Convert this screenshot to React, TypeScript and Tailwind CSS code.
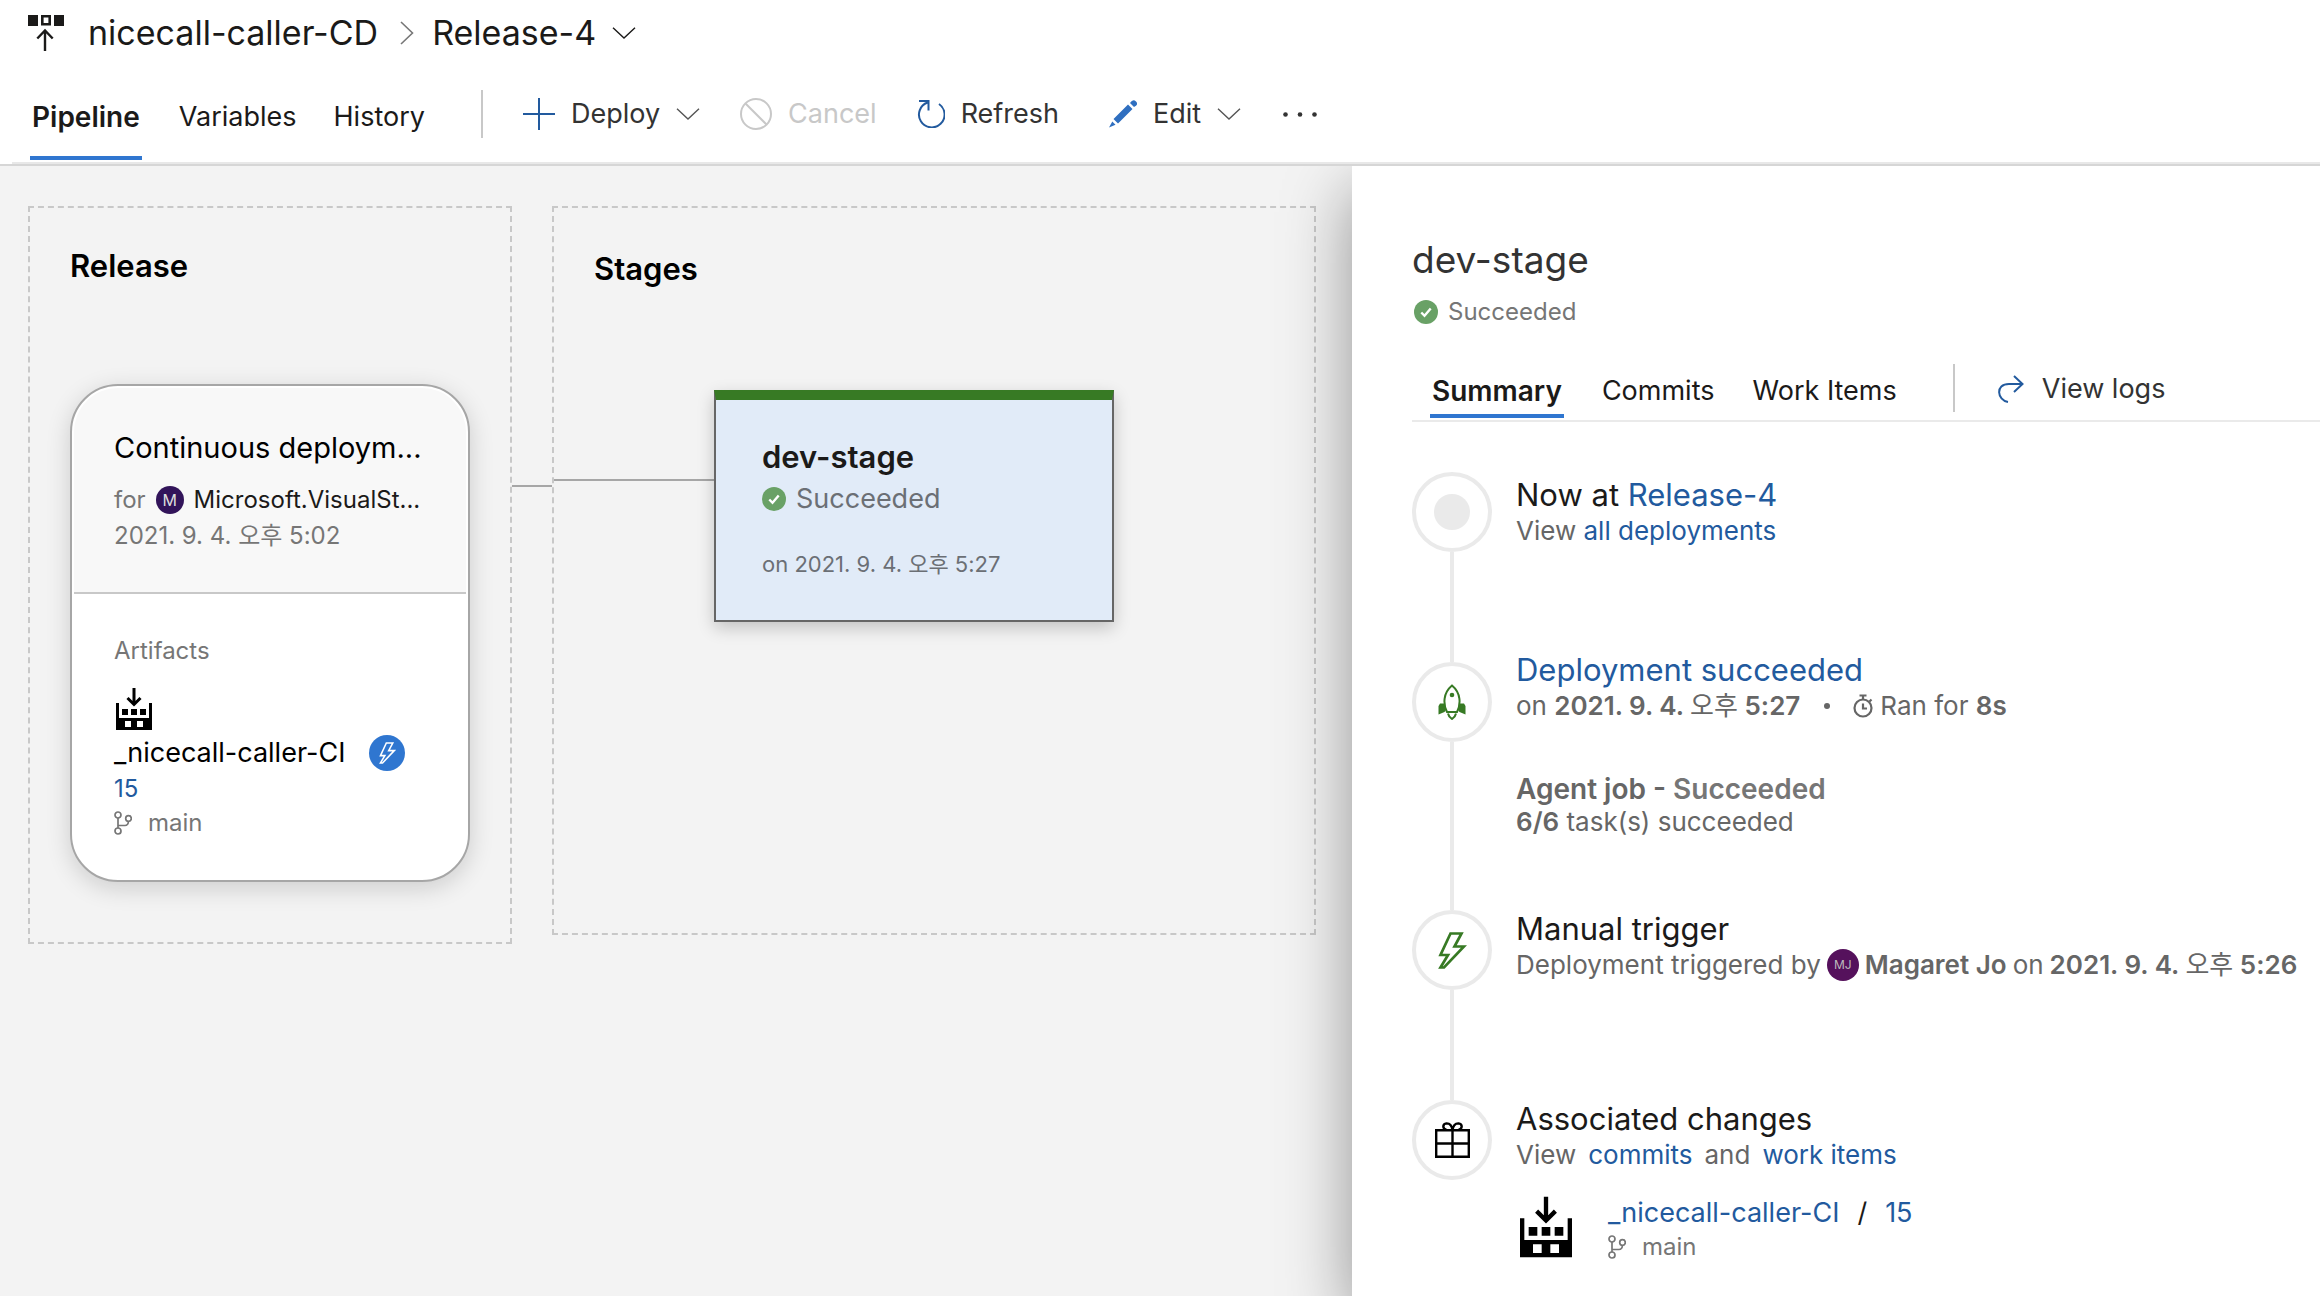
import React from "react";

function DownArrow({ className = "" }: { className?: string }) {
  return (
    <svg viewBox="0 0 24 12" className={"h-3 w-6 " + className} fill="none" stroke="currentColor" strokeWidth="1.4" aria-hidden="true">
      <path d="M1 .8 12 11 23 .8" />
    </svg>
  );
}

function ReleaseIcon() {
  return (
    <svg viewBox="0 0 36 37" className="h-[37px] w-9" aria-hidden="true">
      <path fill="#1b1a19" d="M0 0h10v11H0zM26 0h10v11H26z" />
      <path fill="none" stroke="#1b1a19" strokeWidth="2.6" d="M14.300 1.300h7.400v8h-7.400z" />
      <path fill="none" stroke="#1b1a19" strokeWidth="2.4" d="M17 36V15.500M9.300 23.500 17 15.500l7.700 8" />
    </svg>
  );
}

function BuildIcon({ className }: { className: string }) {
  return (
    <svg viewBox="0 0 36 42" className={className} aria-hidden="true">
      <path d="M0 15h3v15h30V15h3v27H0z" />
      <path fill="#fff" d="M9 33h6v6H9zM21 33h6v6h-6z" />
      <path d="M6 21h6v6H6zM15 21h6v6h-6zM24 21h6v6h-6z" />
      <path fill="none" stroke="#000" strokeWidth="3" d="M18 0v16M11.500 10 18 16.500 24.500 10" />
    </svg>
  );
}

function CheckIcon() {
  return (
    <svg viewBox="0 0 24 24" className="size-6 shrink-0" aria-hidden="true">
      <circle cx="12" cy="12" r="12" fill="#69a166" />
      <path d="m7.300 12.500 3.200 3.300 6.200-7.300" fill="none" stroke="#fff" strokeWidth="2.400" />
    </svg>
  );
}

function BranchIcon() {
  return (
    <svg viewBox="0 0 18 24" className="h-6 w-[18px] shrink-0" fill="none" stroke="currentColor" strokeWidth="1.700" aria-hidden="true">
      <circle cx="4" cy="4" r="3" />
      <circle cx="4" cy="20" r="3" />
      <circle cx="14.500" cy="7.500" r="2.800" />
      <path d="M4 7v10M4 14.500h7q3 0 3.500-4" />
    </svg>
  );
}

function BoltIcon({ className }: { className: string }) {
  return (
    <svg viewBox="0 0 29 37" className={className} fill="none" stroke="currentColor" strokeWidth="2.700" aria-hidden="true">
      <path d="M12.500 1.500h11L16.500 14.500H26L6 35.500H2.500L10 23H2.500z" />
    </svg>
  );
}

function RocketIcon() {
  return (
    <svg viewBox="0 0 28 36" className="h-9 w-7" aria-hidden="true">
      <path fill="none" stroke="#377a24" strokeWidth="2" d="M9 28C5 20 5 9 14 1.500 23 9 23 20 19 28zM10 29.500q.500 3 4 5.500 3.500-2.500 4-5.500" />
      <circle cx="14" cy="11" r="2.300" fill="#377a24" />
      <path fill="#377a24" d="M6 19.500H2L.5 22v8.500l6-2.500 1.500-2zM22 19.500h4l1.500 2.500v8.500l-6-2.500-1.500-2z" />
    </svg>
  );
}

function GiftIcon() {
  return (
    <svg viewBox="0 0 35 36" className="h-9 w-[35px]" fill="none" stroke="#000" strokeWidth="2.400" aria-hidden="true">
      <path d="M1.200 8.200h32.600v26.600H1.200zM1.200 21.500h32.600M17.500 8v26.500" />
      <path d="M11.500 7.800C7 6.500 7.500 2 11.500 1.400 15.500 1.300 17 4.500 17.500 8.200 18 4.500 19.500 1.300 23.500 1.400 27.500 2 28 6.500 23.500 7.800" />
    </svg>
  );
}

function StopwatchIcon() {
  return (
    <svg viewBox="0 0 22 24" className="h-6 w-[22px]" fill="none" stroke="currentColor" strokeWidth="2.200" aria-hidden="true">
      <circle cx="11" cy="14" r="8.500" />
      <path d="M7.500 1.500h7M11 2v3.500M11 9.500v5h4M17.500 7.500l2-2" />
    </svg>
  );
}

function BoldDate({ time }: { time: string }) {
  return (
    <b className="font-semibold">
      2021. 9. 4. <span className="font-normal">오후</span> {time}
    </b>
  );
}

function Event({ icon, early, last, children, className = "" }: { icon: React.ReactNode; early?: boolean; last?: boolean; children: React.ReactNode; className?: string }) {
  return (
    <li className={"flex gap-6 " + className}>
      <div className="flex w-20 shrink-0 flex-col items-center">
        {early && <div className="h-[11px] w-1 bg-[#eaeaea]" />}
        <div className="flex size-20 shrink-0 items-center justify-center rounded-full border-4 border-[#eaeaea]">{icon}</div>
        {!last && <div className="w-1 grow bg-[#eaeaea]" />}
      </div>
      <div className="text-[26px] leading-[34px] whitespace-nowrap text-[#666]">{children}</div>
    </li>
  );
}

const link = "text-[#225a9e]";
const eventTitle = "text-[31px] leading-[38px] text-[#1b1a19]";

export default function App() {
  return (
    <div className="flex min-h-screen flex-col overflow-hidden bg-white font-['Inter','Noto_Sans_CJK_KR',sans-serif] text-[#1b1a19]">
      <header>
        <nav aria-label="Breadcrumb" className="flex h-[66px] items-center pl-7 text-[34px] leading-10">
          <ReleaseIcon />
          <a href="#pipeline" className="ml-6">nicecall-caller-CD</a>
          <svg viewBox="0 0 14 24" className="ml-[22px] h-6 w-3.5" fill="none" stroke="#777" strokeWidth="1.600" aria-hidden="true">
            <path d="M1 1l11.500 11L1 23" />
          </svg>
          <button type="button" className="ml-[18px] flex items-center gap-4">
            Release-4
            <DownArrow />
          </button>
        </nav>
        <div className="flex h-24 pl-[30px] text-[27px] leading-8">
          <nav aria-label="Release views" className="flex gap-[37px]">
            <a href="#pipeline" aria-current="page" className="mb-0.5 border-b-4 border-[#2f76d0] px-0.5 pt-[35px] text-[28px] leading-8 font-semibold">Pipeline</a>
            <a href="#variables" className="pt-[35px]">Variables</a>
            <a href="#history" className="pt-[35px]">History</a>
          </nav>
          <div className="mt-6 ml-14 h-12 w-0.5 bg-[#c8c8c8]" />
          <div className="ml-10 flex items-center text-[#333]">
            <button type="button" className="flex items-center">
              <svg viewBox="0 0 32 32" className="size-8" stroke="#225a9e" strokeWidth="2" aria-hidden="true">
                <path d="M16 0v32M0 16h32" />
              </svg>
              <span className="ml-4">Deploy</span>
              <DownArrow className="ml-4 text-[#555]" />
            </button>
            <button type="button" disabled className="ml-10 flex items-center gap-4 text-[#c8c8c8]">
              <svg viewBox="0 0 32 32" className="size-8" fill="none" stroke="currentColor" strokeWidth="2" aria-hidden="true">
                <circle cx="16" cy="16" r="15" />
                <path d="m5.500 5.500 21 21" />
              </svg>
              Cancel
            </button>
            <button type="button" className="ml-10 flex items-center gap-4">
              <svg viewBox="0 0 28 28" className="size-7" fill="none" stroke="#225a9e" strokeWidth="2" aria-hidden="true">
                <path d="M2 1h9.500v9.500M10.500 2.500A12.800 12.800 0 1 0 22 4" />
              </svg>
              Refresh
            </button>
            <button type="button" className="ml-[50px] flex items-center">
              <svg viewBox="0 0 28 28" className="size-7" fill="#2f6fc0" aria-hidden="true">
                <path d="M19 4.500 23.500 9 9 23.500 4.500 19zM3.300 21.500l3.200 3.200L0 27.500zM21 3q3-4.500 6-1.500T25 7z" />
              </svg>
              <span className="ml-4">Edit</span>
              <DownArrow className="ml-4 text-[#555]" />
            </button>
            <button type="button" aria-label="More actions" className="ml-[42px]">
              <svg viewBox="0 0 34 5" className="h-[5px] w-[34px]" fill="#333" aria-hidden="true">
                <circle cx="2.500" cy="2.500" r="2.300" /><circle cx="17" cy="2.500" r="2.300" /><circle cx="31.500" cy="2.500" r="2.300" />
              </svg>
            </button>
          </div>
        </div>
        <div className="ml-3 h-0.5 bg-[#e8e8e8]" />
        <div className="h-0.5 bg-[#d6d6d6]" />
      </header>

      <div className="flex grow overflow-hidden bg-[#f3f3f3]">
        <main className="flex w-[1352px] shrink-0 items-start pt-10 pl-7">
          <section className="w-[484px] border-2 border-dashed border-[#c8c8c8] px-10 pt-[38px] pb-[60px]">
            <h2 className="text-[31px] leading-10 font-semibold text-black">Release</h2>
            <div className="mt-[98px] rounded-[48px] border-2 border-[#a6a6a6] bg-white p-0.5 shadow-[0_6px_24px_rgba(0,0,0,0.16)]">
              <div className="rounded-t-[44px] border-b-2 border-[#c8c8c8] bg-[#f8f8f8] px-10 py-[38px] text-2xl leading-9 whitespace-nowrap text-[#767676]">
                <h3 className="text-[29px] leading-[44px] text-black">Continuous deploym...</h3>
                <p className="mt-3 flex items-center gap-2.5">
                  for
                  <span className="flex size-7 shrink-0 items-center justify-center rounded-full bg-[#32145a] text-base leading-7 text-[#ddd]">M</span>
                  <span className="text-[#1b1a19]">Microsoft.VisualSt...</span>
                </p>
                <p>2021. 9. 4. 오후 5:02</p>
              </div>
              <div className="px-10 pt-10 pb-[38px] text-2xl leading-[34px] text-[#767676]">
                <h4>Artifacts</h4>
                <BuildIcon className="mt-5 ml-0.5 h-[42px] w-9" />
                <div className="flex items-center gap-6 pt-1 text-[27px] leading-[38px] text-black">
                  _nicecall-caller-CI
                  <span className="flex size-9 items-center justify-center rounded-full bg-[#2f76d0] text-white"><BoltIcon className="h-[22px] w-[17px]" /></span>
                </div>
                <a href="#15" className={link}>15</a>
                <p className="flex items-center gap-4"><BranchIcon />main</p>
              </div>
            </div>
          </section>
          <div className="mt-[279px] h-0.5 w-10 bg-[#a6a6a6]" />
          <section className="w-[764px] border-2 border-dashed border-[#c8c8c8] pt-[41px] pb-[311px]">
            <h2 className="px-10 text-[31px] leading-10 font-semibold text-black">Stages</h2>
            <div className="mt-[101px] flex">
              <div className="mt-[89px] h-0.5 w-40 bg-[#a6a6a6]" />
              <div className="w-[400px] border-2 border-t-[10px] border-[#666] border-t-[#377a24] bg-[#e1ebf8] px-[46px] pt-[34px] pb-[38px] shadow-[0_6px_16px_rgba(0,0,0,0.2)]">
                <h3 className="text-[31px] leading-[46px] font-semibold">dev-stage</h3>
                <p className="flex items-center gap-2.5 text-[27px] leading-[38px] text-[#6b6f75]"><CheckIcon />Succeeded</p>
                <p className="mt-7 text-[22px] leading-9 text-[#6b6f75]">on 2021. 9. 4. 오후 5:27</p>
              </div>
            </div>
          </section>
        </main>

        <aside className="min-w-0 grow bg-white pl-[60px] shadow-[0_24px_64px_rgba(0,0,0,0.4)]">
          <h2 className="pt-[69px] text-[37px] leading-[50px] text-[#333]">dev-stage</h2>
          <p className="mt-[11px] flex items-center gap-2.5 pl-0.5 text-2xl leading-8 text-[#767676]"><CheckIcon />Succeeded</p>
          <div className="mt-8 flex h-[62px] border-b-2 border-[#eaeaea] pl-[18px] text-[27px] leading-8">
            <nav aria-label="Stage views" className="flex gap-[38px]">
              <a href="#summary" aria-current="page" className="mb-0.5 border-b-4 border-[#2f76d0] px-0.5 pt-[15px] text-[28px] leading-8 font-semibold">Summary</a>
              <a href="#commits" className="pt-[15px]">Commits</a>
              <a href="#work-items" className="pt-[15px]">Work Items</a>
            </nav>
            <div className="mt-1 ml-14 h-12 w-0.5 bg-[#c8c8c8]" />
            <button type="button" className="mt-[13px] ml-[43px] flex h-8 items-center gap-[18px] text-[#333]">
              <svg viewBox="0 0 26 28" className="h-7 w-[26px]" fill="none" stroke="#225a9e" strokeWidth="2" aria-hidden="true">
                <path d="M10 27C-1 25-3 9 11 9h13M16 1l8.500 8L16 17" />
              </svg>
              View logs
            </button>
          </div>
          <ol className="mt-[50px]">
            <Event className="min-h-[179px]" icon={<span className="size-9 rounded-full bg-[#eaeaea]" />}>
              <h3 className={eventTitle + " pt-1"}>Now at <a href="#release-4" className={link}>Release-4</a></h3>
              <p>View <a href="#deployments" className={link}>all deployments</a></p>
            </Event>
            <Event early className="min-h-[259px]" icon={<RocketIcon />}>
              <h3 className={eventTitle}><a href="#deployment" className={link}>Deployment succeeded</a></h3>
              <p className="flex items-center">
                <span>on <BoldDate time="5:27" /></span>
                <span className="ml-6 size-1.5 rounded-full bg-[#666]" />
                <span className="ml-[22px]"><StopwatchIcon /></span>
                <span className="ml-1.5">Ran for <b className="font-semibold">8s</b></span>
              </p>
              <p className="mt-[50px] text-[28px] leading-8 font-semibold">Agent job - <span className="text-[#767676]">Succeeded</span></p>
              <p><b className="font-semibold">6/6</b> task(s) succeeded</p>
            </Event>
            <Event className="min-h-[190px]" icon={<BoltIcon className="h-[37px] w-[29px] text-[#377a24]" />}>
              <h3 className={eventTitle}>Manual trigger</h3>
              <p className="flex items-center gap-1.5">
                Deployment triggered by
                <span className="flex size-8 items-center justify-center rounded-full bg-[#55115c] text-xs text-[#bbb]">MJ</span>
                <b className="font-semibold">Magaret Jo</b> on <BoldDate time="5:26" />
              </p>
            </Event>
            <Event last icon={<GiftIcon />}>
              <h3 className={eventTitle}>Associated changes</h3>
              <p className="flex gap-3">View <a href="#commits" className={link}>commits</a> and <a href="#work-items" className={link}>work items</a></p>
              <div className="mt-6 flex pl-1">
                <BuildIcon className="h-[62px] w-[52px]" />
                <div className="ml-9 text-2xl leading-[34px] text-[#767676]">
                  <p className="flex gap-[18px] text-[27px] leading-[34px] text-[#1b1a19]"><a href="#ci" className={link}>_nicecall-caller-CI</a>/<a href="#15" className={link}>15</a></p>
                  <p className="flex items-center gap-4"><BranchIcon />main</p>
                </div>
              </div>
            </Event>
          </ol>
        </aside>
      </div>
    </div>
  );
}
